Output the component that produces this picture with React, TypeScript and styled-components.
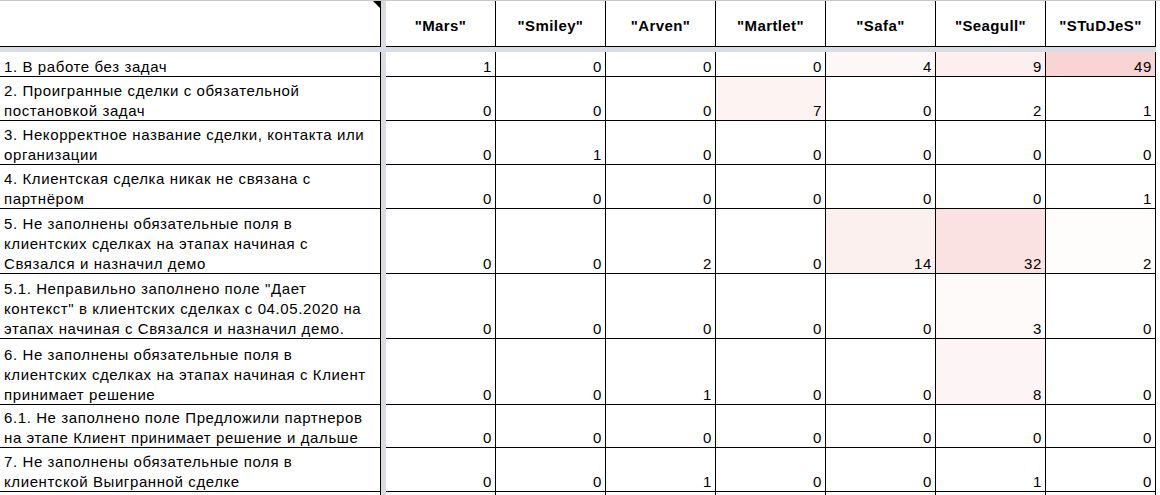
import React from 'react';
import styled, { createGlobalStyle } from 'styled-components';

const GlobalStyle = createGlobalStyle`
  html, body {
    margin: 0;
    padding: 0;
    background: #fff;
    overflow: hidden;
  }
  body {
    font-family: 'Liberation Sans', Arial, sans-serif;
    color: #000;
  }
`;

const Sheet = styled.div`
  width: 1160px;
  height: 495px;
  overflow: hidden;
  border-top: 1px solid #c8c8c8;
  box-sizing: border-box;
`;

const Row = styled.div<{ $h: number }>`
  display: flex;
  height: ${(p) => p.$h}px;
`;

const FreezeRow = styled.div`
  width: 1156px;
  height: 5px;
  background: #dadce3;
`;

const Cell = styled.div`
  box-sizing: border-box;
  height: 100%;
  border-right: 1px solid #000;
  border-bottom: 1px solid #000;
  display: flex;
  font-size: 15px;
  letter-spacing: 0.6px;
  line-height: 21px;
  white-space: nowrap;
  overflow: hidden;
`;

const LabelCell = styled(Cell)`
  position: relative;
  width: 381px;
  flex-direction: column;
  justify-content: flex-end;
  padding-left: 4px;
`;

const LabelText = styled.div`
  margin-bottom: -1px;
`;

const Gap = styled.div`
  width: 5px;
  height: 100%;
  background: #dadce3;
`;

const HeadCell = styled(Cell)`
  width: 110px;
  align-items: center;
  justify-content: center;
  font-weight: 700;
  letter-spacing: 0.4px;
  padding-top: 3px;
`;

const NumCell = styled(Cell)<{ $fill?: string }>`
  width: 110px;
  align-items: flex-end;
  justify-content: flex-end;
  padding-right: 3px;
  background: ${(p) => p.$fill || '#fff'};
  & > span {
    margin-bottom: -1px;
  }
`;

const CommentMark = styled.div`
  position: absolute;
  top: 0;
  right: 0;
  width: 0;
  height: 0;
  border-top: 7px solid #000;
  border-left: 7px solid transparent;
`;

const teams = ['"Mars"', '"Smiley"', '"Arven"', '"Martlet"', '"Safa"', '"Seagull"', '"STuDJeS"'];

interface Line {
  label: string[];
  values: number[];
  fills?: Record<number, string>;
  h: number;
}

const rows: Line[] = [
  {
    label: ['1. В работе без задач'],
    values: [1, 0, 0, 0, 4, 9, 49],
    fills: { 4: '#fef7f7', 5: '#fdefef', 6: '#f8d5d4' },
    h: 25,
  },
  {
    label: ['2. Проигранные сделки с обязательной', 'постановкой задач'],
    values: [0, 0, 0, 7, 0, 2, 1],
    fills: { 3: '#fdf3f3' },
    h: 44,
  },
  {
    label: ['3. Некорректное название сделки, контакта или', 'организации'],
    values: [0, 1, 0, 0, 0, 0, 0],
    h: 44,
  },
  {
    label: ['4. Клиентская сделка никак не связана с', 'партнёром'],
    values: [0, 0, 0, 0, 0, 0, 1],
    h: 44,
  },
  {
    label: [
      '5. Не заполнены обязательные поля в',
      'клиентских сделках на этапах начиная с',
      'Связался и назначил демо',
    ],
    values: [0, 0, 2, 0, 14, 32, 2],
    fills: { 4: '#fcf0ef', 5: '#f9e2e1', 6: '#fffcfc' },
    h: 65,
  },
  {
    label: [
      '5.1. Неправильно заполнено поле "Дает',
      'контекст" в клиентских сделках с 04.05.2020 на',
      'этапах начиная с Связался и назначил демо.',
    ],
    values: [0, 0, 0, 0, 0, 3, 0],
    fills: { 5: '#fffafa' },
    h: 65,
  },
  {
    label: [
      '6. Не заполнены обязательные поля в',
      'клиентских сделках на этапах начиная с Клиент',
      'принимает решение',
    ],
    values: [0, 0, 1, 0, 0, 8, 0],
    fills: { 5: '#fdf5f5' },
    h: 66,
  },
  {
    label: ['6.1. Не заполнено поле Предложили партнеров', 'на этапе Клиент принимает решение и дальше'],
    values: [0, 0, 0, 0, 0, 0, 0],
    h: 43,
  },
  {
    label: ['7. Не заполнены обязательные поля в', 'клиентской Выигранной сделке'],
    values: [0, 0, 1, 0, 0, 1, 0],
    h: 44,
  },
];

export default function App() {
  return (
    <>
      <GlobalStyle />
      <Sheet>
        <Row $h={46}>
          <LabelCell>
            <CommentMark />
          </LabelCell>
          <Gap />
          {teams.map((t) => (
            <HeadCell key={t}>{t}</HeadCell>
          ))}
        </Row>
        <FreezeRow />
        {rows.map((r, i) => (
          <Row key={i} $h={r.h}>
            <LabelCell>
              {r.label.map((l) => (
                <LabelText key={l}>{l}</LabelText>
              ))}
            </LabelCell>
            <Gap />
            {r.values.map((v, j) => (
              <NumCell key={j} $fill={r.fills?.[j]}>
                <span>{v}</span>
              </NumCell>
            ))}
          </Row>
        ))}
        <Row $h={30}>
          <LabelCell />
          <Gap />
          {teams.map((t) => (
            <NumCell key={t} />
          ))}
        </Row>
      </Sheet>
    </>
  );
}
